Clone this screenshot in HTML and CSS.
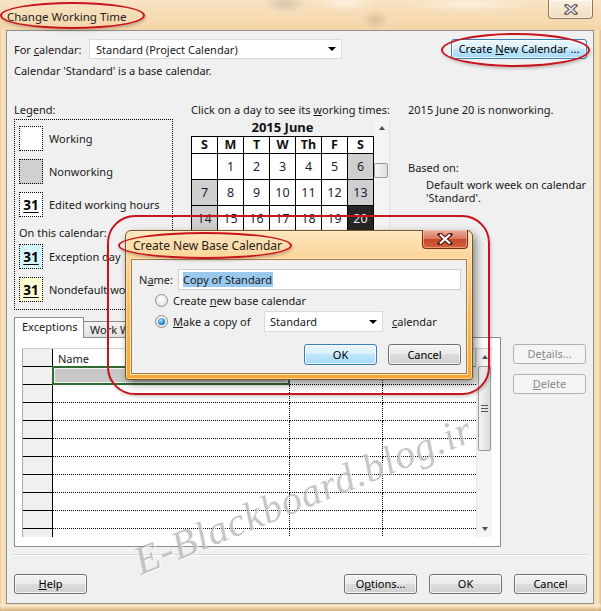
FILE: index.html
```html
<!DOCTYPE html>
<html>
<head>
<meta charset="utf-8">
<title>Change Working Time</title>
<link rel="stylesheet" href="styles.css">
</head>
<body>
<div class="window">
  <div class="titlebar">
    <span class="title">Change Working Time</span>
    <div class="tb-close">
      <svg width="14" height="11" viewBox="0 0 14 11"><path d="M2.5 1.5 L11.5 9.5 M11.5 1.5 L2.5 9.5" stroke="#6a6a6a" stroke-width="4" stroke-linecap="square"/><path d="M2.5 1.5 L11.5 9.5 M11.5 1.5 L2.5 9.5" stroke="#f2f2f2" stroke-width="1.6"/></svg>
    </div>
  </div>

  <div class="client">
    <div class="row-cal">
      <span class="lbl-cal">For <u>c</u>alendar:</span>
      <div class="combo combo-main"><span>Standard (Project Calendar)</span><span class="arrow"></span></div>
      <button class="btn hot btn-new">Create <u>N</u>ew Calendar ...</button>
    </div>
    <div class="base-note">Calendar 'Standard' is a base calendar.</div>

    <div class="mid">
      <div class="legend-col">
        <div class="cap">Legend:</div>
        <div class="legend-box">
          <div class="leg-item"><span class="sw"></span><span class="leg-txt">Working</span></div>
          <div class="leg-item"><span class="sw sw-non"></span><span class="leg-txt">Nonworking</span></div>
          <div class="leg-item"><span class="sw"><b>31</b></span><span class="leg-txt">Edited working hours</span></div>
          <div class="leg-sub">On this calendar:</div>
          <div class="leg-item leg-first"><span class="sw sw-exc"><b>31</b></span><span class="leg-txt">Exception day</span></div>
          <div class="leg-item"><span class="sw sw-nd"><b>31</b></span><span class="leg-txt">Nondefault work week</span></div>
        </div>
      </div>

      <div class="cal-col">
        <div class="cap">Click on a day to see its <u>w</u>orking times:</div>
        <div class="cal-wrap">
          <div class="cal">
            <div class="cal-title">2015 June</div>
            <div class="cal-grid">
              <div class="hd">S</div><div class="hd">M</div><div class="hd">T</div><div class="hd">W</div><div class="hd">Th</div><div class="hd">F</div><div class="hd">S</div>
              <div class="d"></div><div class="d">1</div><div class="d">2</div><div class="d">3</div><div class="d">4</div><div class="d">5</div><div class="d g">6</div>
              <div class="d g">7</div><div class="d">8</div><div class="d">9</div><div class="d">10</div><div class="d">11</div><div class="d">12</div><div class="d g">13</div>
              <div class="d g">14</div><div class="d">15</div><div class="d">16</div><div class="d">17</div><div class="d">18</div><div class="d">19</div><div class="d sel">20</div>
              <div class="d g"></div><div class="d"></div><div class="d"></div><div class="d"></div><div class="d"></div><div class="d"></div><div class="d g"></div>
              <div class="d g"></div><div class="d"></div><div class="d"></div><div class="d"></div><div class="d"></div><div class="d"></div><div class="d"></div>
            </div>
          </div>
          <div class="cal-scroll">
            <span class="up-arrow"></span>
            <span class="cal-thumb"></span>
          </div>
        </div>
      </div>

      <div class="info-col">
        <div class="info-line">2015 June 20 is nonworking.</div>
        <div class="info-based">Based on:</div>
        <div class="info-detail">Default work week on calendar<br>'Standard'.</div>
      </div>
    </div>

    <div class="tabs-area">
      <div class="tabs-main">
        <div class="tabstrip">
          <div class="tab active">Exceptions</div>
          <div class="tab">Work Weeks</div>
        </div>
        <div class="tab-panel">
          <div class="tbl">
            <div class="tbl-body">
              <div class="tr th"><div class="rh"></div><div class="c1">Name</div><div class="c2"></div><div class="c3"></div></div>
              <div class="tr"><div class="rh"></div><div class="c1 selcell"></div><div class="c2"></div><div class="c3"></div></div>
              <div class="tr"><div class="rh"></div><div class="c1"></div><div class="c2"></div><div class="c3"></div></div>
              <div class="tr"><div class="rh"></div><div class="c1"></div><div class="c2"></div><div class="c3"></div></div>
              <div class="tr"><div class="rh"></div><div class="c1"></div><div class="c2"></div><div class="c3"></div></div>
              <div class="tr"><div class="rh"></div><div class="c1"></div><div class="c2"></div><div class="c3"></div></div>
              <div class="tr"><div class="rh"></div><div class="c1"></div><div class="c2"></div><div class="c3"></div></div>
              <div class="tr"><div class="rh"></div><div class="c1"></div><div class="c2"></div><div class="c3"></div></div>
              <div class="tr"><div class="rh"></div><div class="c1"></div><div class="c2"></div><div class="c3"></div></div>
              <div class="tr"><div class="rh"></div><div class="c1"></div><div class="c2"></div><div class="c3"></div></div>
              <div class="tr last"><div class="rh"></div><div class="c1"></div><div class="c2"></div><div class="c3"></div></div>
            </div>
            <div class="tbl-scroll">
              <span class="up-arrow"></span>
              <span class="tbl-thumb"><i></i><i></i><i></i></span>
              <span class="down-arrow"></span>
            </div>
          </div>
        </div>
      </div>
      <div class="side-btns">
        <button class="btn dis">De<u>t</u>ails...</button>
        <button class="btn dis"><u>D</u>elete</button>
      </div>
    </div>

    <div class="sep"></div>

    <div class="bottom-btns">
      <button class="btn"><u>H</u>elp</button>
      <div class="spacer"></div>
      <button class="btn">O<u>p</u>tions...</button>
      <button class="btn">OK</button>
      <button class="btn">Cancel</button>
    </div>
  </div>

  <div class="watermark">E-Blackboard.blog.ir</div>

  <div class="dlg">
    <div class="dlg-title">Create New Base Calendar</div>
    <div class="dlg-close">
      <svg width="16" height="12" viewBox="0 0 16 12"><path d="M3 1.5 L13 10.5 M13 1.5 L3 10.5" stroke="#5a1a0e" stroke-width="4.4" stroke-linecap="square"/><path d="M3 1.5 L13 10.5 M13 1.5 L3 10.5" stroke="#ffffff" stroke-width="2.2"/></svg>
    </div>
    <div class="dlg-client">
      <div class="dlg-name">
        <span class="dlg-lbl">N<u>a</u>me:</span>
        <div class="input"><span class="hl">Copy of Standard</span></div>
      </div>
      <div class="dlg-radio">
        <span class="radio"></span><span>Create <u>n</u>ew base calendar</span>
      </div>
      <div class="dlg-radio r2">
        <span class="radio"><span class="dot"></span></span><span class="copy-lbl"><u>M</u>ake a copy of</span>
        <div class="combo combo-sm"><span>Standard</span><span class="arrow"></span></div>
        <span class="cal-word"><u>c</u>alendar</span>
      </div>
      <div class="dlg-btns">
        <button class="btn hot">OK</button>
        <button class="btn">Cancel</button>
      </div>
    </div>
  </div>

  <div class="mark mark-title"></div>
  <div class="mark mark-new"></div>
  <div class="mark mark-dlg"></div>
  <div class="mark mark-dlgtitle"></div>
</div>
</body>
</html>
```

FILE: styles.css
```css
* { box-sizing: border-box; }
html, body { margin: 0; padding: 0; }
body {
  width: 601px;
  height: 611px;
  overflow: hidden;
  font-family: "Noto Sans", "DejaVu Sans", sans-serif;
  font-size: 11px;
  color: #1a1a1a;
  background: #f3d7ab;
}
u { text-decoration: underline; text-underline-offset: 1px; }

.window {
  position: relative;
  width: 601px;
  height: 611px;
  display: flex;
  flex-direction: column;
  background:
    linear-gradient(to bottom, rgba(255,255,255,0) 0, rgba(255,255,255,0) 603px, rgba(255,240,215,.6) 606px, rgba(190,150,100,.5) 610px),
    linear-gradient(to right, #e9c892 0, #f9e6c8 2px, #f5d9ad 6px, #f5d9ad 594px, #f9e3c2 598px, #e2bd86 601px);
}

/* ---------- title bar ---------- */
.titlebar {
  position: relative;
  height: 30px;
  padding: 2px 0 0 7px;
  display: flex;
  align-items: center;
  background:
    radial-gradient(ellipse 22px 9px at 285px 4px, rgba(150,140,130,.35), rgba(150,140,130,0)),
    radial-gradient(ellipse 30px 8px at 345px 3px, rgba(255,255,255,.55), rgba(255,255,255,0)),
    radial-gradient(ellipse 14px 10px at 375px 20px, rgba(140,120,90,.25), rgba(140,120,90,0)),
    radial-gradient(ellipse 60px 8px at 470px 4px, rgba(255,255,255,.5), rgba(255,255,255,0)),
    linear-gradient(to bottom, #f8e3c4, #f4d5a8);
}
.title { color: #1e1e1e; font-size: 11.5px; }
.tb-close {
  position: absolute;
  right: 8px;
  top: 0;
  width: 45px;
  height: 19px;
  border: 1px solid rgba(110,80,45,.75);
  border-top: none;
  border-radius: 0 0 4px 4px;
  background: linear-gradient(to bottom, #fbf1e2, #f1dcbc);
  box-shadow: inset 0 0 0 1px rgba(255,255,255,.6);
  display: flex;
  align-items: center;
  justify-content: center;
}

/* ---------- client ---------- */
.client {
  flex: 1;
  margin: 0 7px 7px 6px;
  border: 1px solid #8e8f8f;
  background: #f0f0f0;
  padding: 8px 6px 0 7px;
  display: flex;
  flex-direction: column;
}

.row-cal { display: flex; align-items: center; height: 20px; }
.lbl-cal { width: 75px; flex: none; }
.combo {
  height: 20px;
  background: #fff;
  border: 1px solid #dadada;
  display: flex;
  align-items: center;
  justify-content: space-between;
  padding: 0 5px 0 6px;
  white-space: nowrap;
}
.combo-main { width: 253px; }
.arrow {
  width: 0; height: 0;
  border-left: 4px solid transparent;
  border-right: 4px solid transparent;
  border-top: 4px solid #000;
}
.btn {
  display: block;
  font: inherit;
  color: #000;
  height: 20px;
  width: 73px;
  padding: 0;
  line-height: 18px;
  text-align: center;
  white-space: nowrap;
  border: 1px solid #707070;
  border-radius: 3px;
  background: linear-gradient(to bottom, #f2f2f2 0%, #ebebeb 49%, #dddddd 50%, #cfcfcf 100%);
  box-shadow: inset 0 0 0 1px rgba(255,255,255,.75);
}
.btn.hot {
  border-color: #3c7fb1;
  background: linear-gradient(to bottom, #eaf6fd 0%, #d9f0fc 49%, #bee6fd 50%, #a7d9f5 100%);
}
.btn.dis {
  border-color: #adb2b5;
  background: #f4f4f4;
  box-shadow: none;
  color: #8a8a8a;
}
.btn-new { margin-left: auto; width: 136px; }

.base-note { margin-top: 4px; line-height: 15px; height: 15px; }

/* ---------- middle: legend / calendar / info ---------- */
.mid { display: flex; height: 215px; margin-top: 24px; }
.cap { line-height: 15px; height: 15px; white-space: nowrap; }

.legend-col { width: 159px; flex: none; }
.legend-box {
  margin-top: 2px;
  height: 191px;
  border: 1px dotted #000;
  padding: 6px 4px 0 4px;
}
.leg-item { display: flex; align-items: center; height: 25px; margin-bottom: 8px; }
.leg-item.leg-first { margin-top: 4px; }
.leg-txt { margin-left: 6px; white-space: nowrap; }
.leg-sub { line-height: 15px; height: 15px; white-space: nowrap; }
.sw {
  flex: none;
  width: 24px;
  height: 25px;
  border: 1px dotted #000;
  background: #fff;
  display: flex;
  align-items: center;
  justify-content: center;
}
.sw b { font-size: 13.5px; text-decoration: underline; text-underline-offset: 2px; color: #000; }
.sw-non { background: #d0d0d0; }
.sw-exc { background: repeating-linear-gradient(45deg, #c6f2f7 0 1px, #e8fdff 1px 2px); }
.sw-nd { background: repeating-linear-gradient(45deg, #fdf9c4 0 1px, #fffee6 1px 2px); }

.cal-col { width: 199px; flex: none; margin-left: 18px; }
.cal-wrap { display: flex; margin-top: 2px; }
.cal { width: 183px; flex: none; }
.cal-title { height: 17px; line-height: 16px; text-align: center; font-weight: bold; font-size: 13px; color: #111; }
.cal-grid {
  display: grid;
  grid-template-columns: repeat(7, 25px);
  grid-template-rows: 16px repeat(5, 25px);
  gap: 1px;
  padding: 1px;
  background: #000;
}
.hd { background: #fff; font-weight: bold; font-size: 12.5px; text-align: center; line-height: 16px; color: #111; }
.d { background: #fff; font-size: 12.5px; display: flex; align-items: center; justify-content: center; color: #1d1d38; }
.d.g { background: #cfcfcf; }
.d.sel { background: #262626; color: #e6e6e6; }
.cal-scroll {
  width: 16px;
  height: 191px;
  background: #f4f4f4;
  border-right: 1px solid #e2e2e2;
  display: flex;
  flex-direction: column;
  align-items: center;
}
.up-arrow, .down-arrow {
  width: 0; height: 0;
  border-left: 3.5px solid transparent;
  border-right: 3.5px solid transparent;
}
.up-arrow { border-bottom: 4px solid #505050; }
.down-arrow { border-top: 4px solid #505050; }
.cal-scroll .up-arrow { margin-top: 7px; }
.cal-thumb {
  margin-top: 33px;
  width: 14px;
  height: 15px;
  border: 1px solid #9a9a9a;
  border-radius: 2px;
  background: linear-gradient(to right, #f6f6f6, #dedede);
  align-self: flex-start;
}

.info-col { margin-left: 18px; flex: 1; white-space: nowrap; }
.info-line { line-height: 15px; height: 15px; }
.info-based { margin-top: 43px; line-height: 15px; height: 15px; }
.info-detail { margin-top: 3px; margin-left: 18px; line-height: 13px; }

/* ---------- tabs ---------- */
.tabs-area { display: flex; height: 230px; }
.tabs-main { width: 487px; flex: none; display: flex; flex-direction: column; }
.tabstrip { display: flex; height: 20px; align-items: flex-end; }
.tab {
  height: 16px;
  padding: 0 6px;
  border: 1px solid #898c95;
  border-bottom: none;
  background: linear-gradient(to bottom, #f2f2f2, #e2e2e2);
  line-height: 15px;
  white-space: nowrap;
}
.tab + .tab { border-left: none; }
.tab.active {
  height: 21px;
  width: 70px;
  padding-left: 7px;
  background: #fff;
  margin-bottom: -1px;
  position: relative;
  z-index: 1;
  line-height: 18px;
}
.tab-panel {
  height: 210px;
  border: 1px solid #898c95;
  background: #fff;
  padding: 10px 7px 0 7px;
}
.tbl {
  display: flex;
  width: 470px;
  height: 189px;
  border-left: 1px solid #a9a9a9;
  border-top: 1px solid #cfcfcf;
}
.tbl-body { width: 453px; flex: none; overflow: hidden; }
.tr { display: flex; height: 18px; }
.tr.last { height: 9px; }
.rh { width: 30px; flex: none; background: #f0f0f0; border-right: 1px solid #000; border-bottom: 1px solid #000; }
.tr.last .rh { border-bottom: none; }
.c1, .c2, .c3 { border-bottom: 1px dotted #000; flex: none; }
.c1 { width: 237px; border-right: 1px dotted #000; }
.c2 { width: 93px; border-right: 1px dotted #000; }
.c3 { width: 93px; }
.tr.last .c1, .tr.last .c2, .tr.last .c3 { border-bottom: none; }
.th .c1, .th .c2, .th .c3 { border-bottom: 1px solid #8a8a8a; border-right: 1px solid #c8c8c8; padding: 2px 0 0 5px; line-height: 16px; color: #1a1a1a; }
.selcell { position: relative; }
.selcell::after {
  content: "";
  position: absolute;
  left: -1px; top: -1px; right: -1px; bottom: -1px;
  border: 2px solid #2e6b2e;
  background: #c8c8c8;
  box-shadow: inset 0 0 0 1px #f4f4f4;
}
.tbl-scroll {
  width: 16px;
  flex: none;
  background: #f4f4f4;
  border-left: 1px solid #e6e6e6;
  display: flex;
  flex-direction: column;
  align-items: center;
}
.tbl-scroll .up-arrow { margin-top: 6px; }
.tbl-thumb {
  margin-top: 7px;
  width: 13px;
  height: 85px;
  border: 1px solid #9a9a9a;
  border-radius: 2px;
  background: linear-gradient(to right, #f5f5f5, #dadada);
  display: flex;
  flex-direction: column;
  align-items: center;
  justify-content: center;
  gap: 2px;
}
.tbl-thumb i { display: block; width: 7px; height: 1px; background: #555; }
.tbl-scroll .down-arrow { margin-top: auto; margin-bottom: 6px; }

.side-btns { margin-left: 12px; margin-top: 27px; display: flex; flex-direction: column; gap: 10px; }

.sep {
  margin: 7px -2px 0 -2px;
  height: 2px;
  border-top: 1px solid #d3dbe2;
  border-bottom: 1px solid #ffffff;
}
.bottom-btns { display: flex; margin-top: 18px; gap: 12px; }
.spacer { flex: 1; }

/* ---------- watermark ---------- */
.watermark {
  position: absolute;
  left: 303px;
  top: 495px;
  transform: translate(-50%, -50%) rotate(-22deg);
  font-family: "Liberation Serif", serif;
  font-style: italic;
  font-size: 40px;
  color: rgba(160,160,160,.6);
  text-shadow: 1px 1px 0 rgba(255,255,255,.7);
  white-space: nowrap;
  letter-spacing: 1px;
}

/* ---------- sub dialog ---------- */
.dlg {
  position: absolute;
  left: 125px;
  top: 230px;
  width: 348px;
  height: 150px;
  border: 1px solid #7a5526;
  border-radius: 6px 6px 3px 3px;
  background: linear-gradient(to bottom, #fde6c1 0%, #fbd394 20%, #f9bb5c 55%, #f7a535 100%);
  box-shadow: 3px 4px 8px rgba(0,0,0,.45), inset 0 0 0 1px rgba(255,240,210,.6);
  padding: 0 5px 5px 5px;
  display: flex;
  flex-direction: column;
}
.dlg-title { height: 28px; padding: 7px 0 0 2px; line-height: 15px; color: #1e1e1e; font-size: 12px; }
.dlg-close {
  position: absolute;
  right: 4px;
  top: -1px;
  width: 46px;
  height: 19px;
  border: 1px solid #7b2a16;
  border-top: none;
  border-radius: 0 0 4px 4px;
  background: linear-gradient(to bottom, #ebb0a0 0%, #d9765a 48%, #c7472a 52%, #d2623c 100%);
  box-shadow: inset 0 0 0 1px rgba(255,210,190,.5);
  display: flex;
  align-items: center;
  justify-content: center;
}
.dlg-client {
  flex: 1;
  background: #f0f0f0;
  border: 1px solid #a77a40;
  box-shadow: 0 0 0 1px #fde7c2;
  padding: 9px 5px 0 7px;
  display: flex;
  flex-direction: column;
}
.dlg-name { display: flex; align-items: center; height: 21px; }
.dlg-lbl { width: 39px; flex: none; }
.input {
  width: 284px;
  height: 21px;
  background: #fff;
  border: 1px solid #d0d0d0;
  padding: 2px 0 0 4px;
}
.hl { background: #99c9ef; line-height: 15px; display: inline-block; padding-right: 1px; }
.dlg-radio { display: flex; align-items: center; height: 21px; padding-left: 16px; white-space: nowrap; }
.radio {
  flex: none;
  width: 13px;
  height: 13px;
  border-radius: 50%;
  border: 1px solid #8e8f8f;
  background: radial-gradient(circle at 50% 40%, #ffffff 0, #ececec 55%, #d2d2d2 100%);
  margin-right: 5px;
  display: flex;
  align-items: center;
  justify-content: center;
}
.dot {
  width: 7px;
  height: 7px;
  border-radius: 50%;
  background: radial-gradient(circle at 40% 35%, #a8e4ff 0, #2c8bd6 55%, #0d4a86 100%);
}
.copy-lbl { width: 91px; }
.combo-sm { width: 119px; height: 21px; padding-left: 5px; }
.cal-word { margin-left: 9px; }
.dlg-btns { display: flex; justify-content: flex-end; gap: 11px; margin-top: 12px; }
.dlg-btns .btn { height: 21px; line-height: 19px; }

/* ---------- red annotation marks ---------- */
.mark {
  position: absolute;
  border: 2px solid #c8141c;
  box-shadow: 1px 2px 3px rgba(0,0,0,.2);
}
.mark-title { left: 0; top: 2px; width: 145px; height: 27px; border-radius: 50%; }
.mark-new { left: 441px; top: 33px; width: 149px; height: 34px; border-radius: 50%; }
.mark-dlg { left: 107px; top: 215px; width: 383px; height: 180px; border-radius: 28px; }
.mark-dlgtitle { left: 118px; top: 232px; width: 174px; height: 27px; border-radius: 50%; }
```
